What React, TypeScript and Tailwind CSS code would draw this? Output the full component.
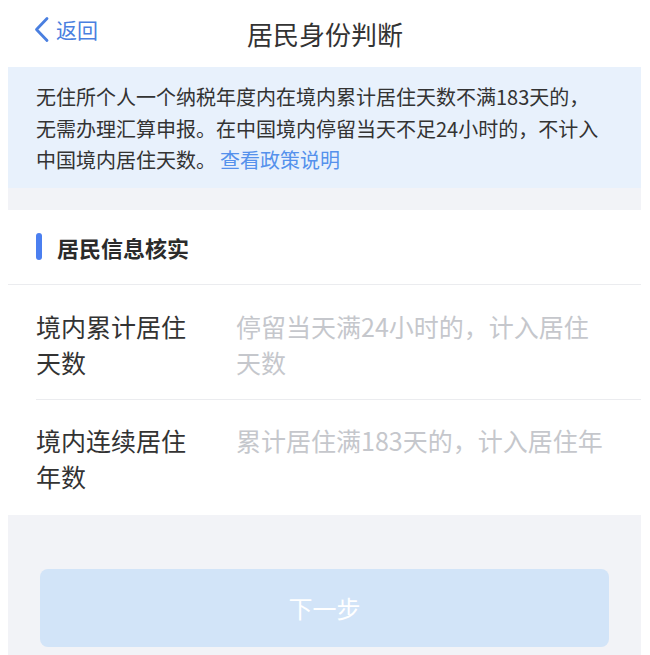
export default function App() {
  return (
    <div className="h-[655px] w-[650px] overflow-hidden bg-white font-['Noto_Sans_CJK_SC','Noto_Sans',sans-serif] text-[#333]">
      {/* nav bar */}
      <header className="relative flex h-[67px] items-center justify-center">
        <button className="absolute left-[33px] top-[16px] flex items-center gap-[6px] text-[#4a7fe0]">
          <svg width="17" height="27" viewBox="0 0 17 27" fill="none">
            <path
              d="M14 2.5 L3.5 13.5 L14 24.5"
              stroke="currentColor"
              strokeWidth="2.8"
              strokeLinecap="round"
              strokeLinejoin="round"
            />
          </svg>
          <span className="text-[21px] leading-none">返回</span>
        </button>
        <h1 className="text-[26px] leading-none">居民身份判断</h1>
      </header>

      <main className="ml-2 w-[633px]">
        {/* notice */}
        <div className="bg-[#e8f1fc] pb-[12px] pl-7 pt-[14px]">
          <p className="w-[572px] text-[20px] leading-[31.5px]">
            <span>
              无住所个人一个纳税年度内在境内累计居住天数不满183天的，无需办理汇算申报。在中国境内停留当天不足24小时的，不计入中国境内居住天数。
            </span>
            <a className="ml-[4px] text-[#5591ec]">查看政策说明</a>
          </p>
        </div>
        <div className="h-[22px] bg-[#f2f3f7]" />

        {/* form */}
        <section className="bg-white">
          <div className="flex h-[75px] items-center gap-[15px] border-b border-[#ebecef] pl-7">
            <span className="h-[27px] w-[6px] rounded-full bg-[#4b7ff0]" />
            <h2 className="text-[22px] font-bold leading-none text-[#2b2b2b]">居民信息核实</h2>
          </div>

          <div className="ml-7 flex border-b border-[#ebecef] pb-[19px] pt-[23px] text-[25px] leading-[36px]">
            <div className="w-[160px] shrink-0">境内累计居住天数</div>
            <div className="ml-[40px] w-[370px] text-[#c5c7cc]">停留当天满24小时的，计入居住天数</div>
          </div>

          <div className="ml-7 flex pb-[21px] pt-[22px] text-[25px] leading-[36px]">
            <div className="w-[160px] shrink-0">境内连续居住年数</div>
            <div className="ml-[40px] w-[370px] overflow-hidden whitespace-nowrap text-[#c5c7cc]">
              累计居住满183天的，计入居住年
            </div>
          </div>
        </section>

        {/* footer */}
        <div className="h-[140px] bg-[#f2f3f7] px-8 pt-[54px]">
          <button className="flex h-[78px] w-full items-center justify-center rounded-[8px] bg-[#d2e4f8] text-[24px] text-white">
            下一步
          </button>
        </div>
      </main>
    </div>
  );
}
